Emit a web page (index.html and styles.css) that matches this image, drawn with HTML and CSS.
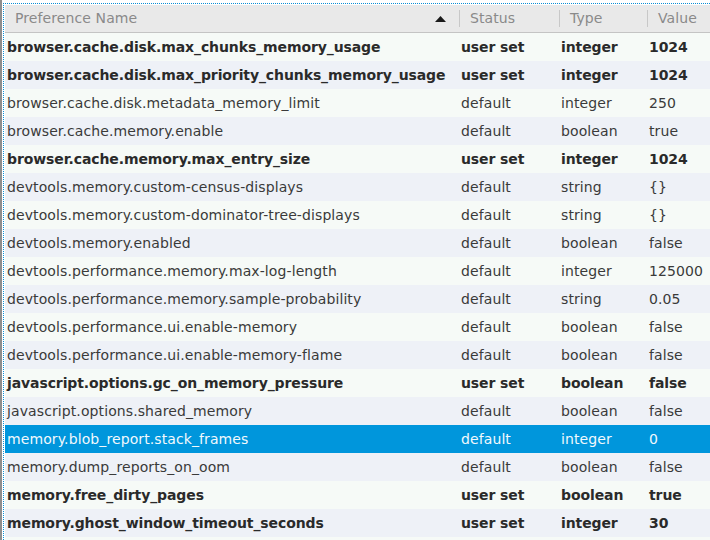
FILE: index.html
```html
<!DOCTYPE html>
<html>
<head>
<meta charset="utf-8">
<link rel="stylesheet" href="styles.css">
</head>
<body>
<div class="frame">
  <div class="focus">
    <div class="tree">
      <div class="head">
        <div class="hc hname"><span class="hlabel">Preference Name</span><svg class="sort" width="11" height="6" viewBox="0 0 11 6"><polygon points="5.5,0 11,6 0,6" fill="#1a1a1a"/></svg></div>
        <div class="hc"><span class="hl">Status</span></div>
        <div class="hc"><span class="hl">Type</span></div>
        <div class="hc"><span class="hl">Value</span></div>
      </div>
      <div class="row b"><span>browser.cache.disk.max_chunks_memory_usage</span><span>user set</span><span>integer</span><span>1024</span></div>
      <div class="row b"><span>browser.cache.disk.max_priority_chunks_memory_usage</span><span>user set</span><span>integer</span><span>1024</span></div>
      <div class="row"><span>browser.cache.disk.metadata_memory_limit</span><span>default</span><span>integer</span><span>250</span></div>
      <div class="row"><span>browser.cache.memory.enable</span><span>default</span><span>boolean</span><span>true</span></div>
      <div class="row b"><span>browser.cache.memory.max_entry_size</span><span>user set</span><span>integer</span><span>1024</span></div>
      <div class="row"><span>devtools.memory.custom-census-displays</span><span>default</span><span>string</span><span>{}</span></div>
      <div class="row"><span>devtools.memory.custom-dominator-tree-displays</span><span>default</span><span>string</span><span>{}</span></div>
      <div class="row"><span>devtools.memory.enabled</span><span>default</span><span>boolean</span><span>false</span></div>
      <div class="row"><span>devtools.performance.memory.max-log-length</span><span>default</span><span>integer</span><span>125000</span></div>
      <div class="row"><span>devtools.performance.memory.sample-probability</span><span>default</span><span>string</span><span>0.05</span></div>
      <div class="row"><span>devtools.performance.ui.enable-memory</span><span>default</span><span>boolean</span><span>false</span></div>
      <div class="row"><span>devtools.performance.ui.enable-memory-flame</span><span>default</span><span>boolean</span><span>false</span></div>
      <div class="row b"><span>javascript.options.gc_on_memory_pressure</span><span>user set</span><span>boolean</span><span>false</span></div>
      <div class="row"><span>javascript.options.shared_memory</span><span>default</span><span>boolean</span><span>false</span></div>
      <div class="row sel"><span>memory.blob_report.stack_frames</span><span>default</span><span>integer</span><span>0</span></div>
      <div class="row"><span>memory.dump_reports_on_oom</span><span>default</span><span>boolean</span><span>false</span></div>
      <div class="row b"><span>memory.free_dirty_pages</span><span>user set</span><span>boolean</span><span>true</span></div>
      <div class="row b"><span>memory.ghost_window_timeout_seconds</span><span>user set</span><span>integer</span><span>30</span></div>
      <div class="row"><span>&nbsp;</span><span></span><span></span><span></span></div>
    </div>
  </div>
</div>
</body>
</html>
```

FILE: styles.css
```css
html, body {
  margin: 0;
  padding: 0;
  background: #ffffff;
}
body {
  width: 710px;
  height: 540px;
  overflow: hidden;
  font-family: "DejaVu Sans", "Noto Sans", sans-serif;
  font-size: 14px;
  letter-spacing: 0.1px;
}
.frame {
  height: 540px;
  border-left: 2px solid #8e8e8e;
  padding-left: 1px;
  padding-top: 3px;
  box-sizing: border-box;
}
.focus {
  border-top: 1px dotted #0a8fd6;
  border-left: 1px dotted #0a8fd6;
  padding-top: 1px;
  padding-left: 1px;
  height: 100%;
  box-sizing: border-box;
  overflow: hidden;
}
.head, .row {
  display: grid;
  grid-template-columns: 454px 100px 88px 1fr;
}
.head {
  height: 27px;
  background: #e9e9e9;
  border-bottom: 1px solid #c4c4c4;
  color: #8a8a8a;
}
.hc {
  display: flex;
  align-items: center;
}
.hname {
  padding-left: 10px;
}
.hlabel {
  line-height: 17px;
}
.sort {
  margin-left: auto;
  margin-right: 13px;
  margin-top: 1px;
}
.hl {
  border-left: 1px solid #c8c8c8;
  padding-left: 10px;
  line-height: 17px;
}
.row {
  height: 28px;
  line-height: 28px;
  color: #3a3a3a;
  background: #f6faf7;
}
.row:nth-child(odd) {
  background: #eef1f7;
}
.row span {
  padding-left: 2px;
  white-space: nowrap;
  overflow: hidden;
}
.row.b {
  font-weight: bold;
  color: #2a2a2a;
  letter-spacing: -0.1px;
}
.row.sel {
  background: #0096dc;
  color: #f2f9fd;
}
```
